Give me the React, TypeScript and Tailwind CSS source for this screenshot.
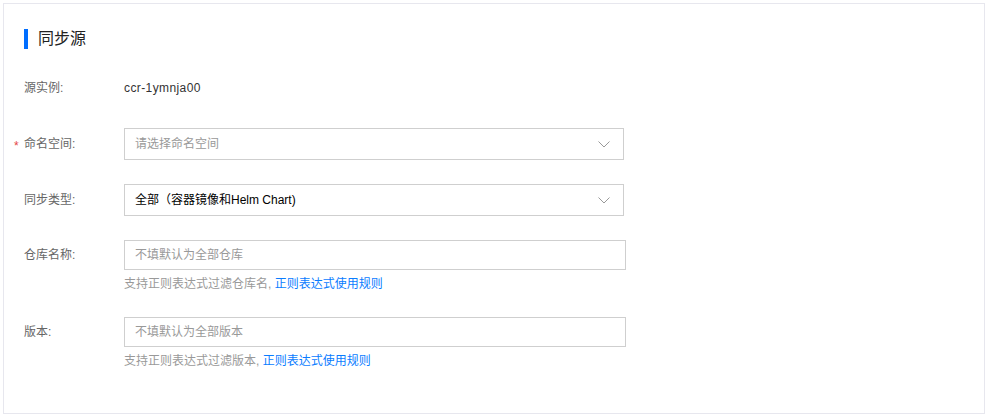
const font = { fontFamily: '"Liberation Sans", "Noto Sans CJK SC", sans-serif' };

const Chevron = () => (
  <svg width="12" height="7" viewBox="0 0 12 7" className="shrink-0">
    <polyline points="0.5,0.5 6,6 11.5,0.5" fill="none" stroke="#999" strokeWidth="1" />
  </svg>
);

const Label = ({ text, required, h = 32 }: { text: string; required?: boolean; h?: number }) => (
  <div
    className={`relative w-[100px] shrink-0 flex items-center text-[12px] text-[#666] ${h === 32 ? 'h-[32px]' : 'h-[30px]'}`}
  >
    {required && <span className="absolute left-[-10px] top-[9px] text-[#e54545] text-[12px]">*</span>}
    {text}
  </div>
);

const SelectBox = ({ value, placeholder }: { value?: string; placeholder?: string }) => (
  <div className="w-[500px] h-[32px] border border-[#cfcfcf] bg-white flex items-center justify-between pl-[10px] pr-[13px] text-[12px]">
    {value ? <span className="text-[#000]">{value}</span> : <span className="text-[#999]">{placeholder}</span>}
    <Chevron />
  </div>
);

const TextInput = ({ placeholder }: { placeholder: string }) => (
  <div className="w-[502px] h-[30px] border border-[#cfcfcf] flex items-center pl-[10px] text-[12px] text-[#999]">
    {placeholder}
  </div>
);

const HelpText = ({ prefix }: { prefix: string }) => (
  <div className="mt-[5px] h-[18px] leading-[18px] text-[12px] text-[#999]">
    {prefix}, <a className="text-[#0a7cff]">正则表达式使用规则</a>
  </div>
);

export default function App() {
  return (
    <div className="w-[988px] h-[418px] bg-white p-[3px] pb-[4px]" style={font}>
      <div className="h-full border border-[#e7e7ee] bg-white px-[20px] pt-[25px]">
        {/* 标题 */}
        <div className="flex items-center h-[20px]">
          <div className="w-[4px] h-[20px] bg-[#006eff]" />
          <span className="ml-[10px] text-[16px] text-[#222]">同步源</span>
        </div>

        <div className="mt-[23px] flex flex-col gap-[24px]">
          <div className="flex">
            <Label text="源实例:" />
            <div className="h-[32px] flex items-center text-[12px] text-[#333] tracking-[0.4px]">ccr-1ymnja00</div>
          </div>

          <div className="flex">
            <Label text="命名空间:" required />
            <SelectBox placeholder="请选择命名空间" />
          </div>

          <div className="flex">
            <Label text="同步类型:" />
            <SelectBox value="全部（容器镜像和Helm Chart)" />
          </div>

          <div className="flex">
            <Label text="仓库名称:" h={30} />
            <div>
              <TextInput placeholder="不填默认为全部仓库" />
              <HelpText prefix="支持正则表达式过滤仓库名" />
            </div>
          </div>

          <div className="flex">
            <Label text="版本:" h={30} />
            <div>
              <TextInput placeholder="不填默认为全部版本" />
              <HelpText prefix="支持正则表达式过滤版本" />
            </div>
          </div>
        </div>
      </div>
    </div>
  );
}
